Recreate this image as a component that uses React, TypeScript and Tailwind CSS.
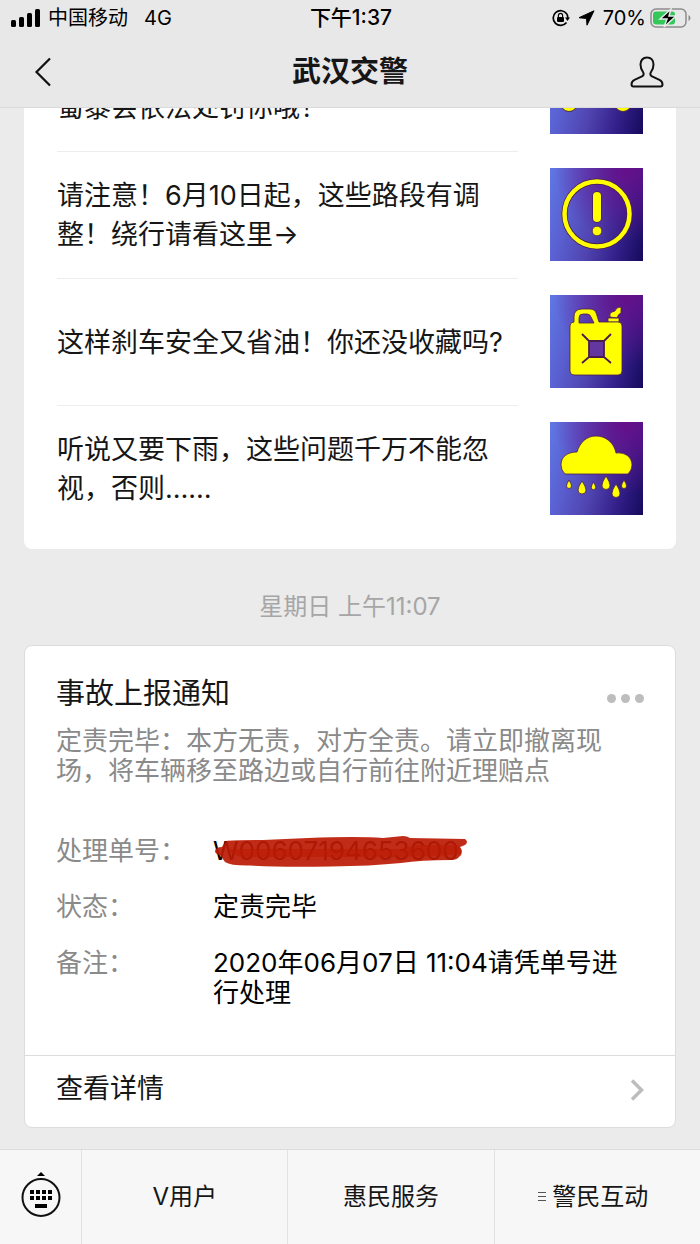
import type { ReactNode } from 'react';

type Article = {
  title: string;
  icon: ReactNode;
  clipped?: boolean;
};

function CarIcon() {
  return (
    <svg viewBox="0 0 93 93" className="size-full" fill="#ffff00" stroke="#4a2a50" strokeWidth="1" aria-hidden="true">
      <path d="M13 38l8-18q2-4 7-4h37q5 0 7 4l8 18v22H13z" />
      <circle cx="19" cy="62" r="8.500" />
      <circle cx="73" cy="62" r="8.500" />
    </svg>
  );
}

function WarningIcon() {
  return (
    <svg viewBox="0 0 93 93" className="size-full" fill="none" aria-hidden="true">
      <circle cx="47" cy="46" r="32.500" stroke="#4a1c4e" strokeWidth="6" />
      <circle cx="47" cy="46" r="32.500" stroke="#ffff00" strokeWidth="4.500" />
      <path d="M47 28v22" stroke="#4a1c4e" strokeWidth="9.500" strokeLinecap="round" />
      <path d="M47 28v22" stroke="#ffff00" strokeWidth="8" strokeLinecap="round" />
      <circle cx="47" cy="63" r="4.800" fill="#ffff00" stroke="#4a1c4e" strokeWidth="0.800" />
    </svg>
  );
}

function FuelIcon() {
  return (
    <svg viewBox="0 0 93 93" className="size-full" aria-hidden="true">
      <g fill="#ffff00" stroke="#4a1c4e" strokeWidth="0.800" strokeLinejoin="round">
        <path d="M58 27v-4h11v4zM60 22q-1-4 2-5l3-1q1-4 6-4v6q-3 1-4 5z" />
        <path
          fillRule="evenodd"
          d="M24 27v-5q0-8 8-8h8q5 0 6.500 5l2.500 8h19q4 0 4 4v45q0 4-4 4H24q-4 0-4-4V31q0-4 4-4zM29 28h15l-3-6q-1-3-4-3h-4q-4 0-4 4z"
        />
      </g>
      <path d="M39 46h15v16H39z" fill="#6437a0" />
      <path d="M39 46h15v16H39zM39 46l-7-7M54 46l7-7M39 62l-7 6M54 62l7 6" fill="none" stroke="#4a1c4e" strokeWidth="1.800" />
    </svg>
  );
}

function RainIcon() {
  return (
    <svg viewBox="0 0 93 93" className="size-full" fill="#ffff00" stroke="#4a1c4e" strokeWidth="0.800" aria-hidden="true">
      <path d="M15 52q-4-4-4-9c0-8 6-13 16-13 3-10 10-16 19-16s18 6 20 17c9-1 16 4 16 12q0 5-4 9z" />
      <path d="M19 58q2.500 4 2.500 6a2.500 2.500 0 0 1-5 0q0-2 2.500-6zM32 59q4 6 4 9a4 4 0 0 1-8 0q0-3 4-9zM43.500 60q2.200 3.500 2.200 5.500a2.200 2.200 0 0 1-4.400 0q0-2 2.200-5.500zM56 54q4 6 4 9.500a4 4 0 0 1-8 0q0-3.500 4-9.500zM66 62q4 6 4 9.500a4 4 0 0 1-8 0q0-3.500 4-9.500zM74 58q2.500 4 2.500 6a2.500 2.500 0 0 1-5 0q0-2 2.500-6z" />
    </svg>
  );
}

const articles: Article[] = [
  { title: '蜀黍会依法处罚你哦！', icon: <CarIcon />, clipped: true },
  { title: '请注意！6月10日起，这些路段有调整！绕行请看这里→', icon: <WarningIcon /> },
  { title: '这样刹车安全又省油！你还没收藏吗?', icon: <FuelIcon /> },
  { title: '听说又要下雨，这些问题千万不能忽视，否则……', icon: <RainIcon /> },
];

function StatusBar() {
  return (
    <div className="grid h-9 grid-cols-[1fr_auto_1fr] items-center pl-[11px] pr-[9px] text-[20px] leading-9 text-black">
      <div className="flex items-center">
        <svg width="29" height="18" viewBox="0 0 29 18" aria-hidden="true">
          <rect x="0" y="11" width="5" height="7" rx="1.500" />
          <rect x="8" y="8" width="5" height="10" rx="1.500" />
          <rect x="16" y="4" width="5" height="14" rx="1.500" />
          <rect x="24" y="0" width="5" height="18" rx="1.500" />
        </svg>
        <span className="ml-2">中国移动</span>
        <span className="ml-4">4G</span>
      </div>
      <span className="text-[21px] font-medium">下午1:37</span>
      <div className="flex items-center justify-end">
        <svg width="18" height="18" viewBox="0 0 18 18" fill="none" stroke="#000" strokeWidth="1.700" aria-hidden="true">
          <path d="M14.800 5A7.400 7.400 0 1 0 14.500 13.500" />
          <path d="M14.800 5q1 1.500 1 4" />
          <path d="M13 8.500h5l-2.500 3.500z" fill="#000" stroke="none" />
          <rect x="5" y="8" width="7" height="5" rx="1" fill="#000" stroke="none" />
          <path d="M6.400 8V6.500a2.100 2.100 0 0 1 4.200 0V8" strokeWidth="1.200" />
        </svg>
        <svg width="17" height="16" viewBox="0 0 17 16" className="ml-2" stroke="#000" strokeLinejoin="round" aria-hidden="true">
          <path d="M16 0.800L1 7.700l7.500.8.500 6.700z" />
        </svg>
        <span className="ml-2">70%</span>
        <svg width="41" height="20" viewBox="0 0 41 20" className="ml-1" aria-hidden="true">
          <rect x="1" y="1" width="35" height="18" rx="5" fill="none" stroke="#8c8c8c" strokeWidth="1.500" />
          <path d="M38.500 7v6q2-1 2-3t-2-3z" fill="#8c8c8c" />
          <rect x="3" y="3.500" width="22" height="13" rx="3" fill="#34c759" />
          <path d="M21 1L10 11h7l-3 8 12-11h-7z" fill="#000" stroke="#e9e9e9" strokeWidth="1.500" />
        </svg>
      </div>
    </div>
  );
}

function Header() {
  return (
    <header className="relative z-10 border-b border-[#dadada] bg-[#e9e8e9]">
      <StatusBar />
      <div className="grid h-[71px] grid-cols-[1fr_auto_1fr] items-center px-8">
        <button type="button" aria-label="返回" className="justify-self-start">
          <svg width="20" height="30" viewBox="0 0 20 30" fill="none" stroke="#111" strokeWidth="2.200" aria-hidden="true">
            <path d="M18 1.500L4.500 15 18 28.500" />
          </svg>
        </button>
        <h1 className="text-[29px] font-semibold leading-10">武汉交警</h1>
        <button type="button" aria-label="公众号资料" className="justify-self-end pr-1">
          <svg width="34" height="32" viewBox="0 0 34 32" fill="none" stroke="#111" strokeWidth="2" strokeLinejoin="round" aria-hidden="true">
            <path d="M17 1.500c-4.200 0-6.500 3-6.500 7 0 3 1 5.500 2.500 7.500 1.200 1.800.8 3.500-1 4.300l-7.500 3.500C2 25 1.500 26.500 1.500 28.500q0 2 2 2h27q2 0 2-2c0-2-.5-3.500-3-4.700L22 20.300c-1.800-.8-2.200-2.500-1-4.300 1.500-2 2.500-4.500 2.500-7.500 0-4-2.300-7-6.500-7z" />
          </svg>
        </button>
      </div>
    </header>
  );
}

function ArticleList() {
  return (
    <ul className="mx-6 -mt-[84px] rounded-lg bg-white px-[33px] pb-[17px]">
      {articles.map((article) => (
        <li key={article.title}>
          <a href="#article" className="flex h-[127px] gap-8">
            <span className="flex flex-1 items-center border-t border-[#ededed]">
              <span className={article.clipped ? 'pt-[39px] text-[27px] leading-[39px]' : 'text-[27px] leading-[39px]'}>
                {article.title}
              </span>
            </span>
            <span className="my-[17px] size-[93px] shrink-0 bg-[radial-gradient(circle_at_82%_0%,#650f8a_0%,transparent_60%),linear-gradient(105deg,#6078e4_0%,#5a5fd0_25%,#5044b0_50%,#34208a_75%,#140a5c_100%)]">
              {article.icon}
            </span>
          </a>
        </li>
      ))}
    </ul>
  );
}

function NoticeCard() {
  return (
    <section className="mx-6 mb-5 rounded-lg border border-[#dcdcdc] bg-white">
      <div className="px-[31px] pb-[47px] pt-7">
        <div className="flex items-center justify-between">
          <h2 className="text-[29px] leading-10">事故上报通知</h2>
          <button type="button" aria-label="更多" className="flex gap-[5px] pt-2">
            <span className="size-[9px] rounded-full bg-[#bdbdbd]" />
            <span className="size-[9px] rounded-full bg-[#bdbdbd]" />
            <span className="size-[9px] rounded-full bg-[#bdbdbd]" />
          </button>
        </div>
        <p className="mt-3 text-[26px] leading-[30px] text-[#8a8a8a]">
          定责完毕：本方无责，对方全责。请立即撤离现场，将车辆移至路边或自行前往附近理赔点
        </p>
        <dl className="mt-[50px] grid grid-cols-[157px_1fr] gap-y-[26px] pr-2 text-[26px] leading-[30px]">
          <dt className="text-[#8a8a8a]">处理单号：</dt>
          <dd className="relative text-black">
            W00607194653600
            <svg width="256" height="32" viewBox="0 0 256 32" className="absolute left-0 top-0" fill="#bb1a03" aria-hidden="true">
              <path fillOpacity="0.920" d="M13 5Q20 4 50 4L95 2q50-2 75 0l20-2q4 0 7 2l55 1q4 3 0 6l-5 2q4 7-1 10-2 3-8 3-30 0-50 3-30 3-70 3.500-50 1-80-1Q18 30 12 26L7 19q-5-1-5-4 1-4 7-4z" />
              <path d="M14 13h175l15-4h40q8 5 3 9-30 3-75 3H30q-12-2-16-8z" fillOpacity="0.600" />
            </svg>
          </dd>
          <dt className="text-[#8a8a8a]">状态：</dt>
          <dd className="text-black">定责完毕</dd>
          <dt className="text-[#8a8a8a]">备注：</dt>
          <dd className="text-black">2020年06月07日 11:04请凭单号进行处理</dd>
        </dl>
      </div>
      <a href="#detail" className="flex h-[72px] items-center justify-between border-t border-[#dcdcdc] px-[31px] pb-1 text-[27px]">
        查看详情
        <svg width="14" height="22" viewBox="0 0 14 22" fill="none" stroke="#bdbdbd" strokeWidth="3.500" aria-hidden="true">
          <path d="M2 1.500L11.500 11 2 20.500" />
        </svg>
      </a>
    </section>
  );
}

function BottomMenu() {
  return (
    <footer className="grid h-[95px] grid-cols-[81px_1fr_1fr_1fr] border-t border-[#dcdcdc] bg-[#f7f7f7] text-[24px]">
      <button type="button" aria-label="键盘" className="flex items-center justify-center pb-1">
        <svg width="40" height="46" viewBox="0 0 40 46" aria-hidden="true">
          <path d="M20 0l4 4h-8z" />
          <circle cx="20" cy="25.500" r="18.500" fill="none" stroke="#111" strokeWidth="2" />
          <path d="M9 18h4v4H9zM15 18h4v4h-4zM21 18h4v4h-4zM27 18h4v4h-4zM9 24h4v4H9zM15 24h4v4h-4zM21 24h4v4h-4zM27 24h4v4h-4zM14 32h12v4H14z" />
        </svg>
      </button>
      <button type="button" className="border-l border-[#e2e2e2]">V用户</button>
      <button type="button" className="border-l border-[#e2e2e2]">惠民服务</button>
      <button type="button" className="flex items-center justify-center gap-[6px] border-l border-[#e2e2e2] pr-2">
        <svg width="8" height="10" viewBox="0 0 8 10" stroke="#555" strokeWidth="1" aria-hidden="true">
          <path d="M0 .500h8M0 4.500h8M0 8.500h8" />
        </svg>
        警民互动
      </button>
    </footer>
  );
}

export default function App() {
  return (
    <div
      lang="zh-CN"
      className="flex min-h-screen flex-col bg-[#ebebeb] font-['Inter','Noto_Sans_CJK_SC',sans-serif] text-[#161616]"
    >
      <Header />
      <main className="flex-1 overflow-hidden">
        <ArticleList />
        <p className="pb-5 pt-10 text-center text-[24px] leading-9 text-[#a6a6a6]">星期日 上午11:07</p>
        <NoticeCard />
      </main>
      <BottomMenu />
    </div>
  );
}
